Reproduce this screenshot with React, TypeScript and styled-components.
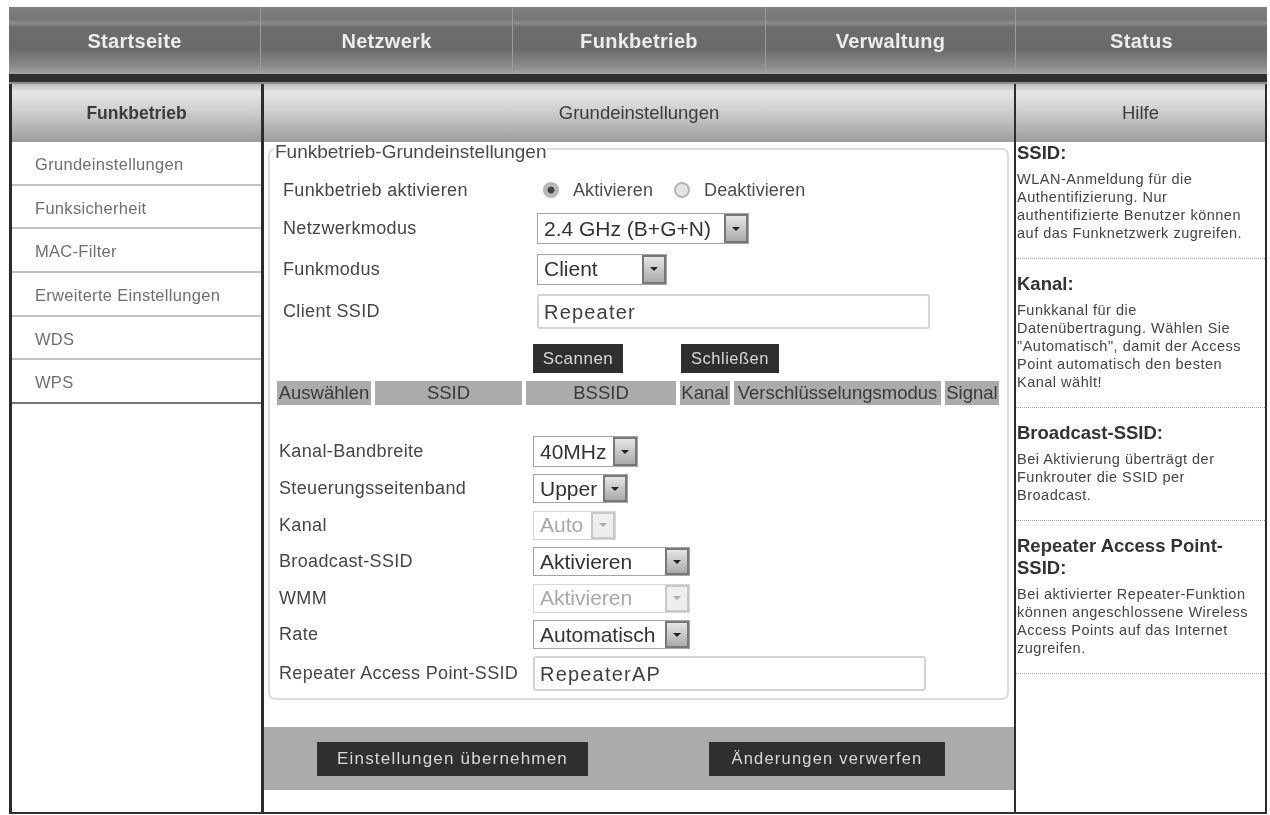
import React from "react";
import styled, {createGlobalStyle} from "styled-components";

const GlobalStyle = createGlobalStyle`
  html, body {
    margin: 0;
    background: #fff;
    font-family: "Liberation Sans", Arial, sans-serif;
  }
`;

const Page = styled.div`
  width: 1270px;
  height: 815px;
  padding: 7px 3px 0 9px;
  box-sizing: border-box;
  overflow: hidden;
  filter: blur(0.6px);
`;

const TopNav = styled.nav`
  display: grid;
  grid-template-columns: 251px 252px 253px 250px 1fr;
  height: 67px;
  background: linear-gradient(180deg, #7f7f7f 0%, #777 18%, #8c8c8c 24%, #6d6d6d 30%, #6a6a6a 62%, #8a8a8a 88%, #a4a4a4 100%);
`;

const NavItem = styled.a`
  display: flex;
  align-items: center;
  justify-content: center;
  padding-top: 2px;
  font-size: 20px;
  font-weight: bold;
  letter-spacing: 0.3px;
  color: #ececec;
  & + & {
    border-left: 1px solid #9b9b9b;
  }
`;

const NavBand = styled.div`
  height: 8px;
  background: #2f2f2f;
  border-bottom: 2px solid #8d8d8d;
`;

const Columns = styled.div`
  display: grid;
  grid-template-columns: 255px 750px 253px;
  height: 730px;
  box-sizing: border-box;
  border-bottom: 2px solid #333;
`;

const Column = styled.div`
  border-left: ${p => p.$border ?? 0}px solid #2c2c2c;
  border-right: ${p => p.$borderRight ?? 0}px solid #2c2c2c;
  min-width: 0;
`;

const ColumnHeader = styled.div`
  display: flex;
  align-items: center;
  justify-content: center;
  height: 58px;
  font-size: ${p => (p.$strong ? 17.5 : 18.5)}px;
  font-weight: ${p => (p.$strong ? "bold" : "normal")};
  color: #3c3c3c;
  background: linear-gradient(180deg, #bdbdbd 0%, #e6e6e6 14%, #d0d0d0 45%, #a6a6a6 90%, #9c9c9c 100%);
`;

const SideLink = styled.a`
  display: flex;
  align-items: center;
  height: 43.7px;
  box-sizing: border-box;
  padding: 3px 0 0 23px;
  font-size: 16.5px;
  letter-spacing: 0.3px;
  color: #6f6f6f;
  border-bottom: 2px solid ${p => (p.$last ? "#777" : "#c2c2c2")};
`;

const Body = styled.div`
  padding: 0 5px 0 4px;
`;

const Fieldset = styled.fieldset`
  margin: 0;
  padding: 0 7px 7px;
  height: 558px;
  box-sizing: border-box;
  border: 2px solid #dcdcdc;
  border-radius: 7px;
`;

const Legend = styled.legend`
  height: 13px;
  margin-left: -3px;
  padding: 0 1px;
  font-size: 19px;
  line-height: 20px;
  color: #4a4a4a;
`;

const Section = styled.div`
  padding-top: ${p => p.$top ?? 0}px;
  padding-left: ${p => p.$indent}px;
`;

const FormRow = styled.div`
  display: flex;
  align-items: center;
  height: ${p => p.$h}px;
`;

const Label = styled.label`
  width: 254px;
  flex: none;
  font-size: 18px;
  letter-spacing: 0.35px;
  color: #464646;
  white-space: nowrap;
`;

const RadioGroup = styled.div`
  display: flex;
  align-items: center;
  margin-left: 6px;
`;

const Radio = styled.span`
  display: block;
  box-sizing: border-box;
  width: 16px;
  height: 16px;
  margin-right: 14px;
  border: 2px solid #b5b5b5;
  border-radius: 50%;
  background: ${p => (p.$on ? "radial-gradient(circle, #444 0 3px, #bbb 4px)" : "#e4e4e4")};
`;

const RadioText = styled.span`
  margin-right: 21px;
  font-size: 18px;
  letter-spacing: 0.1px;
  color: #4d4d4d;
`;

const SelectBox = styled.div`
  display: flex;
  align-items: stretch;
  justify-content: space-between;
  width: ${p => p.$w}px;
  height: ${p => p.$tall ? 31 : 29}px;
  box-sizing: border-box;
  border: 1.5px solid ${p => (p.$off ? "#d6d6d6" : "#a5a5a5")};
  font-size: 21px;
  color: ${p => (p.$off ? "#a8a8a8" : "#333")};
`;

const SelectText = styled.span`
  align-self: center;
  padding-left: 6px;
  white-space: nowrap;
`;

const SelectArrow = styled.span`
  display: flex;
  align-items: center;
  justify-content: center;
  width: 24px;
  flex: none;
  box-sizing: border-box;
  border: 2px solid ${p => (p.$off ? "#c8c8c8" : "#777")};
  background: ${p => (p.$off ? "#eee" : "linear-gradient(180deg, #e6e6e6, #aaa)")};
  &::after {
    content: "";
    border-left: 4px solid transparent;
    border-right: 4px solid transparent;
    border-top: 4px solid ${p => (p.$off ? "#aaa" : "#222")};
  }
`;

const TextField = styled.input`
  width: ${p => p.$w}px;
  height: ${p => p.$h}px;
  box-sizing: border-box;
  padding: 3px 5px 0;
  border: 2px solid #d4d4d4;
  border-radius: 3px;
  outline: none;
  font-family: inherit;
  font-size: 20px;
  letter-spacing: 1.2px;
  color: #3f3f3f;
`;

const DarkButton = styled.button`
  display: block;
  width: ${p => p.$w}px;
  height: ${p => p.$h}px;
  padding: 0;
  border: 0;
  background: #2f2f2f;
  font-family: inherit;
  font-size: ${p => p.$size}px;
  letter-spacing: ${p => p.$spacing}px;
  color: #d8d8d8;
`;

const ScanRow = styled.div`
  display: flex;
  gap: 58px;
  margin: 12px 0 8px;
  padding-left: 256px;
`;

const ScanTable = styled.div`
  display: grid;
  grid-template-columns: 94px 147px 150px 50px 207px 54px;
  gap: 4px;
  height: 24px;
  margin-bottom: 28px;
`;

const ScanCell = styled.div`
  display: flex;
  align-items: center;
  justify-content: center;
  background: #ababab;
  font-size: 18.5px;
  color: #3a3a3a;
  white-space: nowrap;
`;

const ActionBar = styled.div`
  display: flex;
  align-items: center;
  justify-content: space-between;
  height: 63px;
  margin-top: 27px;
  padding: 0 69px 0 53px;
  background: #ababab;
`;

const HelpBlock = styled.section`
  padding: 14px 0 16px 1px;
  border-bottom: 1px dotted #a5a5a5;
  &:first-of-type {
    padding-top: 0;
  }
`;

const HelpTitle = styled.h3`
  margin: 0 0 6px;
  font-size: 18.5px;
  line-height: 22px;
  color: #333;
`;

const HelpText = styled.p`
  margin: 0;
  font-size: 14.5px;
  line-height: 18px;
  letter-spacing: 0.5px;
  color: #444;
  white-space: nowrap;
`;

const navItems = ["Startseite", "Netzwerk", "Funkbetrieb", "Verwaltung", "Status"];
const sideItems = ["Grundeinstellungen", "Funksicherheit", "MAC-Filter", "Erweiterte Einstellungen", "WDS", "WPS"];
const scanColumns = ["Auswählen", "SSID", "BSSID", "Kanal", "Verschlüsselungsmodus", "Signal"];

const lowerRows = [
    {label: "Kanal-Bandbreite", value: "40MHz", w: 105, h: 37, tall: true},
    {label: "Steuerungsseitenband", value: "Upper", w: 95, h: 37},
    {label: "Kanal", value: "Auto", w: 83, h: 36, off: true},
    {label: "Broadcast-SSID", value: "Aktivieren", w: 157, h: 37},
    {label: "WMM", value: "Aktivieren", w: 157, h: 36, off: true},
    {label: "Rate", value: "Automatisch", w: 157, h: 37},
];

const helpItems = [
    {title: "SSID:", lines: ["WLAN-Anmeldung für die", "Authentifizierung. Nur", "authentifizierte Benutzer können", "auf das Funknetzwerk zugreifen."]},
    {title: "Kanal:", lines: ["Funkkanal für die", "Datenübertragung. Wählen Sie", "\"Automatisch\", damit der Access", "Point automatisch den besten", "Kanal wählt!"]},
    {title: "Broadcast-SSID:", lines: ["Bei Aktivierung überträgt der", "Funkrouter die SSID per", "Broadcast."]},
    {title: "Repeater Access Point-SSID:", lines: ["Bei aktivierter Repeater-Funktion", "können angeschlossene Wireless", "Access Points auf das Internet", "zugreifen."]},
];

const Select = ({value, w, off, tall}: {value: string; w: number; off?: boolean; tall?: boolean}) => (
    <SelectBox $w={w} $off={off} $tall={tall}>
        <SelectText>{value}</SelectText>
        <SelectArrow $off={off} />
    </SelectBox>
);

export default function App() {
    return (
        <Page>
            <GlobalStyle />
            <TopNav>
                {navItems.map(item => <NavItem key={item}>{item}</NavItem>)}
            </TopNav>
            <NavBand />
            <Columns>
                <Column $border={3} $borderRight={3}>
                    <ColumnHeader $strong>Funkbetrieb</ColumnHeader>
                    {sideItems.map((item, i) => (
                        <SideLink key={item} $last={i === sideItems.length - 1}>{item}</SideLink>
                    ))}
                </Column>
                <Column>
                    <ColumnHeader>Grundeinstellungen</ColumnHeader>
                    <Body>
                        <Fieldset>
                            <Legend>Funkbetrieb-Grundeinstellungen</Legend>
                            <Section $indent={6} $top={16}>
                                <FormRow $h={38}>
                                    <Label>Funkbetrieb aktivieren</Label>
                                    <RadioGroup>
                                        <Radio $on />
                                        <RadioText>Aktivieren</RadioText>
                                        <Radio />
                                        <RadioText>Deaktivieren</RadioText>
                                    </RadioGroup>
                                </FormRow>
                                <FormRow $h={39}>
                                    <Label>Netzwerkmodus</Label>
                                    <Select value="2.4 GHz (B+G+N)" w={212} tall />
                                </FormRow>
                                <FormRow $h={42}>
                                    <Label>Funkmodus</Label>
                                    <Select value="Client" w={130} tall />
                                </FormRow>
                                <FormRow $h={42}>
                                    <Label>Client SSID</Label>
                                    <TextField $w={393} $h={35} defaultValue="Repeater" readOnly />
                                </FormRow>
                            </Section>
                            <ScanRow>
                                <DarkButton $w={90} $h={29} $size={17} $spacing={0.5}>Scannen</DarkButton>
                                <DarkButton $w={98} $h={29} $size={16.5} $spacing={0.5}>Schließen</DarkButton>
                            </ScanRow>
                            <ScanTable>
                                {scanColumns.map(col => <ScanCell key={col}>{col}</ScanCell>)}
                            </ScanTable>
                            <Section $indent={2}>
                                {lowerRows.map(row => (
                                    <FormRow key={row.label} $h={row.h}>
                                        <Label>{row.label}</Label>
                                        <Select value={row.value} w={row.w} off={row.off} tall={row.tall} />
                                    </FormRow>
                                ))}
                                <FormRow $h={40}>
                                    <Label>Repeater Access Point-SSID</Label>
                                    <TextField $w={393} $h={35} defaultValue="RepeaterAP" readOnly />
                                </FormRow>
                            </Section>
                        </Fieldset>
                    </Body>
                    <ActionBar>
                        <DarkButton $w={271} $h={34} $size={17} $spacing={1.2}>Einstellungen übernehmen</DarkButton>
                        <DarkButton $w={236} $h={34} $size={16.5} $spacing={1.2}>Änderungen verwerfen</DarkButton>
                    </ActionBar>
                </Column>
                <Column $border={2} $borderRight={2}>
                    <ColumnHeader>Hilfe</ColumnHeader>
                    {helpItems.map(item => (
                        <HelpBlock key={item.title}>
                            <HelpTitle>{item.title}</HelpTitle>
                            <HelpText>
                                {item.lines.map(line => <React.Fragment key={line}>{line}<br /></React.Fragment>)}
                            </HelpText>
                        </HelpBlock>
                    ))}
                </Column>
            </Columns>
        </Page>
    );
}
